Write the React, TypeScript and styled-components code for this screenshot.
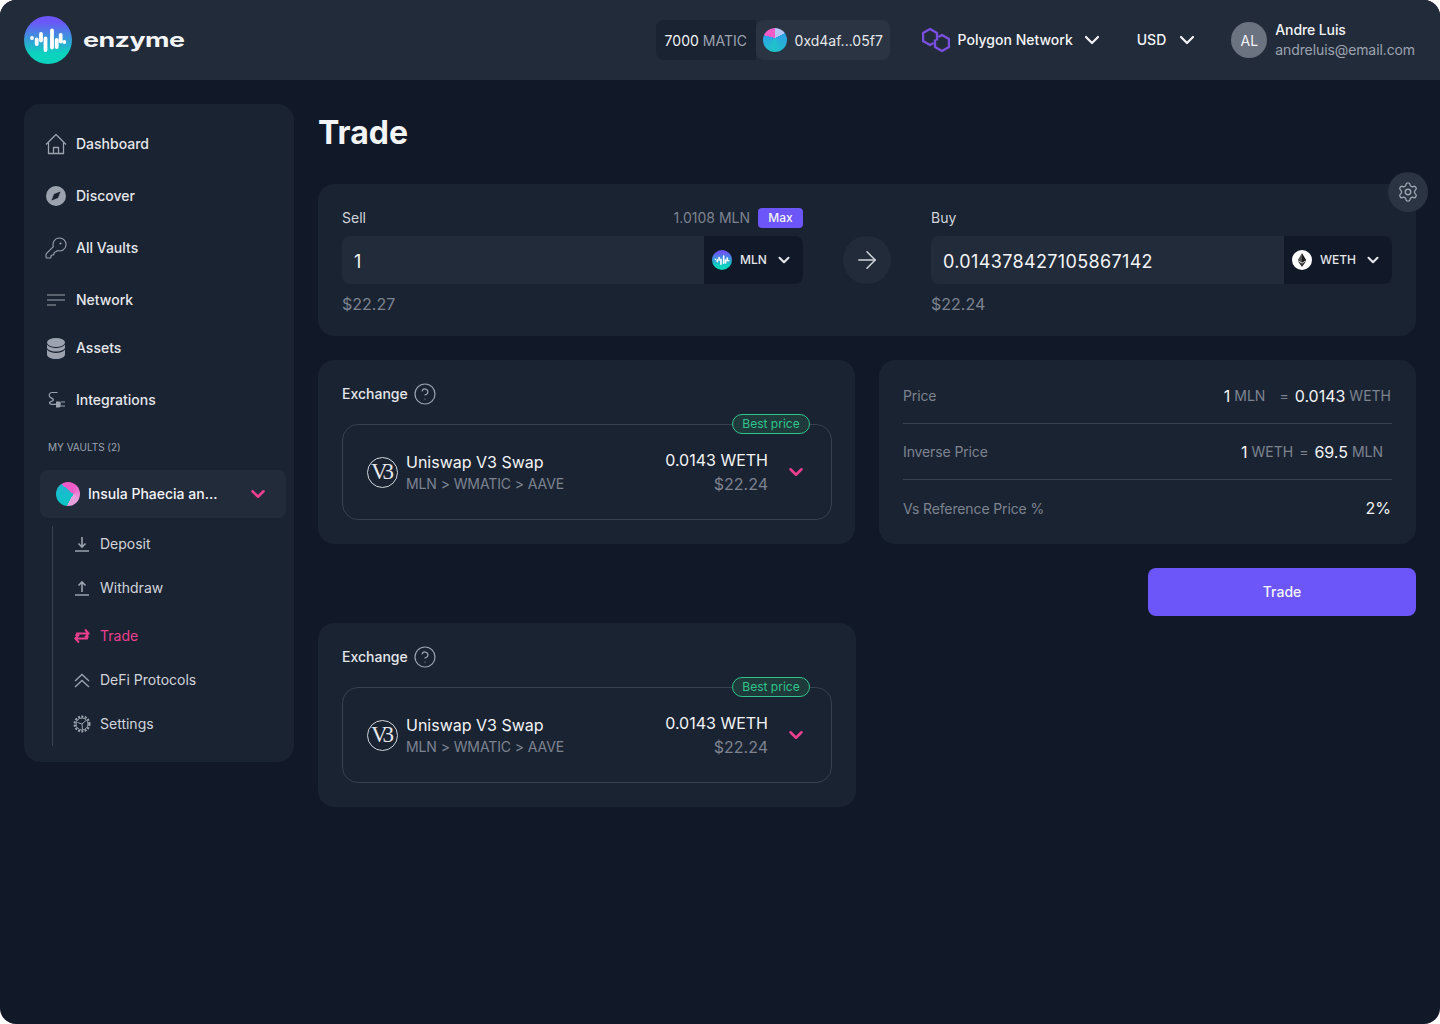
import React from 'react'
import styled, { createGlobalStyle } from 'styled-components'
import { ArrowRight, ChevronDown, CircleHelp, KeyRound, Settings } from 'lucide-react'

const GlobalStyle = createGlobalStyle`
  html, body {
    margin: 0;
    padding: 0;
    background: #ffffff;
  }
  * {
    box-sizing: border-box;
  }
  body {
    font-family: Inter, "Liberation Sans", sans-serif;
  }
`

const Page = styled.div`
  width: 1440px;
  height: 1024px;
  background: #111827;
  border-radius: 16px;
  overflow: hidden;
`

const Label = styled.span`
  margin-bottom: 2px;
`

const Header = styled.header`
  height: 80px;
  background: #222b3a;
  display: flex;
  align-items: center;
  padding: 0 25px 0 24px;
`

const Brand = styled.div`
  display: flex;
  align-items: center;
  gap: 11px;
  margin-right: auto;
`

const BrandName = styled.span`
  color: #f3f4f6;
  font-size: 20px;
  font-weight: 700;
  letter-spacing: -0.4px;
  transform: scaleX(1.34);
  transform-origin: left center;
`

const LogoCircle = styled.div<{ $size: number }>`
  width: ${p => p.$size}px;
  height: ${p => p.$size}px;
  border-radius: 50%;
  background: linear-gradient(180deg, #6c56f9 12%, #0bd3be 78%);
  flex-shrink: 0;
  svg {
    display: block;
    width: 100%;
    height: 100%;
  }
`

const Wallet = styled.div`
  display: flex;
  height: 40px;
  font-size: 14px;
`

const Balance = styled.div`
  display: flex;
  align-items: center;
  gap: 4px;
  width: 100px;
  padding-left: 9px;
  background: #1a2332;
  color: #f3f4f6;
  border-radius: 8px 0 0 8px;
  span {
    color: #9ca3af;
  }
`

const Address = styled.div`
  display: flex;
  align-items: center;
  gap: 8px;
  width: 134px;
  padding-left: 7px;
  background: #2a3443;
  color: #e5e7eb;
  border-radius: 8px;
`

const Identicon = styled.div<{ $kind: 'wallet' | 'vault' }>`
  width: 24px;
  height: 24px;
  border-radius: 50%;
  flex-shrink: 0;
  background: ${p =>
    p.$kind === 'wallet'
      ? 'conic-gradient(at 50% 42%, #b4c6f5 0 62deg, #2f9ee8 62deg, #1fc3c9 190deg, #2f9ee8 285deg, #f05bc8 285deg 360deg)'
      : 'conic-gradient(at 72% 50%, #f05bc8 0deg, #e8a0dc 150deg, #e8a0dc 207deg, #09c6c6 207deg, #20b8d0 310deg, #f05bc8 310deg)'};
`

const HeaderSelect = styled.div<{ $left: number; $gap: number }>`
  display: flex;
  align-items: center;
  gap: ${p => p.$gap}px;
  margin-left: ${p => p.$left}px;
  color: #f3f4f6;
  font-size: 14px;
  font-weight: 500;
  white-space: nowrap;
`

const NetworkChevron = styled(ChevronDown)`
  margin-left: -1px;
`

const User = styled.div`
  display: flex;
  align-items: center;
  gap: 8px;
  margin-left: 32px;
`

const Avatar = styled.div`
  width: 36px;
  height: 36px;
  border-radius: 50%;
  background: #6b7280;
  color: #f3f4f6;
  font-size: 14px;
  display: flex;
  align-items: center;
  justify-content: center;
`

const UserName = styled.div`
  color: #f3f4f6;
  font-size: 14px;
  font-weight: 500;
  line-height: 20px;
  letter-spacing: -0.1px;
`

const UserMail = styled.div`
  color: #9ca3af;
  font-size: 14px;
  line-height: 20px;
  letter-spacing: -0.1px;
`

const Body = styled.div`
  display: flex;
  align-items: flex-start;
  gap: 24px;
  padding: 24px 24px 0;
`

const Sidebar = styled.aside`
  width: 270px;
  flex-shrink: 0;
  background: #1a2332;
  border-radius: 16px;
  padding: 16px 8px 16px 16px;
`

const NavList = styled.nav`
  display: flex;
  flex-direction: column;
  gap: 4px;
`

const NavItem = styled.div<{ $tight?: boolean }>`
  display: flex;
  align-items: center;
  gap: 9px;
  height: 48px;
  padding-left: 5px;
  margin-top: ${p => (p.$tight ? '-4px' : '0')};
  color: #e5e7eb;
  font-size: 14px;
  font-weight: 500;
`

const NavIcon = styled.div`
  width: 22px;
  display: flex;
  justify-content: center;
  color: #9ca3af;
  svg {
    flex-shrink: 0;
  }
`

const SectionLabel = styled.div`
  margin: 15px 0 15px 8px;
  height: 16px;
  line-height: 16px;
  color: #9ca3af;
  font-size: 10px;
  font-weight: 400;
`

const VaultSelect = styled.div`
  display: flex;
  align-items: center;
  height: 48px;
  padding: 0 17px 0 16px;
  background: #222b3a;
  border-radius: 8px;
  color: #f3f4f6;
  font-size: 14px;
  font-weight: 500;
  gap: 8px;
  svg {
    margin-left: auto;
  }
`

const SubList = styled.div`
  display: flex;
  flex-direction: column;
  margin: 8px 0 0 12px;
  border-left: 1px solid #374151;
  height: 220px;
  padding-left: 21px;
`

const SubItem = styled.div<{ $active?: boolean; $top?: number }>`
  display: flex;
  align-items: center;
  gap: 10px;
  height: 44px;
  flex-shrink: 0;
  margin-top: ${p => p.$top ?? 0}px;
  color: ${p => (p.$active ? '#ec3f8f' : '#d1d5db')};
  font-size: 14px;
`

const SubIcon = styled.div<{ $active?: boolean }>`
  width: 16px;
  display: flex;
  justify-content: center;
  color: ${p => (p.$active ? '#ec3f8f' : '#9ca3af')};
  svg {
    flex-shrink: 0;
  }
`

const Main = styled.main`
  flex: 1;
  min-width: 0;
`

const Title = styled.h1`
  margin: 9px 0 31px;
  color: #f3f4f6;
  font-size: 32px;
  line-height: 40px;
  font-weight: 700;
`

const Card = styled.section`
  background: #1a2332;
  border-radius: 16px;
`

const SwapCard = styled(Card)`
  position: relative;
  display: grid;
  grid-template-columns: 461px 48px 461px;
  column-gap: 40px;
  height: 152px;
  padding: 24px;
`

const SettingsButton = styled.div`
  position: absolute;
  top: -12px;
  right: -12px;
  width: 40px;
  height: 40px;
  border-radius: 50%;
  background: #2a3443;
  color: #9ca3af;
  display: flex;
  align-items: center;
  justify-content: center;
`

const SwapLabels = styled.div`
  display: flex;
  align-items: center;
  justify-content: space-between;
  height: 20px;
  color: #d1d5db;
  font-size: 14px;
`

const Available = styled.div`
  display: flex;
  align-items: center;
  gap: 8px;
  color: #7d8490;
`

const MaxPill = styled.div`
  width: 45px;
  height: 20px;
  border-radius: 4px;
  background: #6c56f9;
  color: #f3f4f6;
  font-size: 12px;
  font-weight: 500;
  display: flex;
  align-items: center;
  justify-content: center;
`

const AmountField = styled.div`
  display: flex;
  height: 48px;
  margin-top: 8px;
  border-radius: 8px;
  overflow: hidden;
  background: #222b3a;
`

const AmountValue = styled.div`
  flex: 1;
  padding: 2px 0 0 12px;
  display: flex;
  align-items: center;
  color: #f3f4f6;
  font-size: 18px;
  letter-spacing: 0.35px;
`

const TokenSelect = styled.div<{ $width: number }>`
  width: ${p => p.$width}px;
  display: flex;
  align-items: center;
  gap: 8px;
  padding-left: 8px;
  background: #111827;
  color: #e5e7eb;
  font-size: 12px;
  font-weight: 500;
`

const FiatValue = styled.div`
  margin-top: 11px;
  color: #7d8490;
  font-size: 16px;
  line-height: 18px;
`

const ArrowCircle = styled.div`
  align-self: start;
  margin-top: 28px;
  width: 48px;
  height: 48px;
  border-radius: 50%;
  background: #222b3a;
  color: #d1d5db;
  display: flex;
  align-items: center;
  justify-content: center;
`

const Columns = styled.div`
  display: grid;
  grid-template-columns: 537px 537px;
  column-gap: 24px;
  margin-top: 24px;
`

const ExchangeCard = styled(Card)<{ $below?: boolean }>`
  height: 184px;
  padding: 24px 0 24px 24px;
  width: ${p => (p.$below ? '538px' : 'auto')};
  margin-top: ${p => (p.$below ? '7px' : '0')};
`

const ExchangeHead = styled.div`
  display: flex;
  align-items: center;
  gap: 5px;
  height: 20px;
  color: #e5e7eb;
  font-size: 14px;
  font-weight: 500;
  svg {
    color: #9ca3af;
  }
`

const RouteBox = styled.div`
  position: relative;
  display: flex;
  align-items: center;
  width: 490px;
  height: 96px;
  margin-top: 20px;
  padding: 0 24px;
  border: 1px solid #374151;
  border-radius: 16px;
`

const BestPrice = styled.div`
  position: absolute;
  top: -11px;
  right: 21px;
  height: 20px;
  width: 78px;
  border: 1px solid #31c48d;
  border-radius: 10px;
  background: #1f3a3a;
  color: #31c48d;
  font-size: 12px;
  display: flex;
  align-items: center;
  justify-content: center;
`

const V3Mark = styled.div`
  width: 31px;
  height: 31px;
  border-radius: 50%;
  border: 1px solid #d1d5db;
  color: #e5e7eb;
  font-family: "Liberation Serif", serif;
  font-size: 23px;
  letter-spacing: -5px;
  padding-right: 5px;
  display: flex;
  align-items: center;
  justify-content: center;
  flex-shrink: 0;
`

const RouteInfo = styled.div`
  margin-left: 8px;
`

const RouteName = styled.div`
  color: #f3f4f6;
  font-size: 16px;
  line-height: 24px;
`

const RoutePath = styled.div`
  color: #7d8490;
  font-size: 14px;
  line-height: 20px;
  letter-spacing: -0.1px;
`

const RouteAmount = styled.div`
  margin-left: auto;
  margin-right: 17px;
  text-align: right;
`

const RouteValue = styled.div`
  color: #f3f4f6;
  font-size: 16px;
  line-height: 24px;
`

const RouteFiat = styled.div`
  color: #7d8490;
  font-size: 16px;
  line-height: 24px;
`

const PriceCard = styled(Card)`
  height: 184px;
  padding: 8px 24px;
`

const PriceRow = styled.div<{ $inset?: number; $last?: boolean }>`
  display: flex;
  align-items: center;
  justify-content: space-between;
  height: 56px;
  padding-right: ${p => p.$inset ?? 0}px;
  border-bottom: ${p => (p.$last ? 'none' : '1px solid #374151')};
  color: #7d8490;
  font-size: 14px;
  letter-spacing: -0.12px;
`

const PriceValue = styled.div`
  display: flex;
  align-items: center;
  margin-right: 1px;
  color: #7d8490;
  font-size: 14px;
  letter-spacing: 0;
  b {
    color: #f3f4f6;
    font-size: 16px;
    font-weight: 400;
  }
`

const Equals = styled.span<{ $wide?: boolean }>`
  margin: 0 ${p => (p.$wide ? '6px 0 14px' : '6px')};
`

const TradeRow = styled.div`
  display: flex;
  justify-content: flex-end;
  margin-top: 24px;
`

const TradeButton = styled.button`
  width: 268px;
  height: 48px;
  padding: 0 0 2px;
  border: none;
  border-radius: 8px;
  background: #6c56f9;
  color: #f3f4f6;
  font-family: inherit;
  font-size: 14px;
  font-weight: 500;
`

const Wave = () => (
  <svg viewBox="0 0 48 48" fill="none" stroke="#fff" strokeLinecap="round" strokeWidth="3.800">
    <path d="M8 22h.01M12.700 23.500v4.500M17 18v6.500M21.500 22.500v11.500M28 14.500v17M32.700 24v7M36.700 19v6.500M40.300 26h.01" />
  </svg>
)

const HomeIcon = () => (
  <svg width="22" height="22" viewBox="0 0 22 22" fill="none" stroke="currentColor" strokeWidth="1.300" strokeLinejoin="round">
    <path d="M1 11.500 11 1.500l10 10" />
    <path d="M3.500 9.500v11h15v-11" />
    <path d="M8.500 20.500v-6h5v6" />
  </svg>
)

const CompassIcon = () => (
  <svg width="20" height="20" viewBox="0 0 20 20">
    <circle cx="10" cy="10" r="10" fill="currentColor" />
    <path d="M14.500 5.500 12 12l-6.500 2.500L8 8z" fill="#1a2332" />
  </svg>
)

const LinesIcon = () => (
  <svg width="18" height="12" viewBox="0 0 18 12" fill="none" stroke="currentColor" strokeWidth="1.200">
    <path d="M0 1h18M0 6h18M0 11h9" />
  </svg>
)

const CoinsIcon = () => (
  <svg width="18" height="21" viewBox="0 0 18 21" fill="currentColor">
    <ellipse cx="9" cy="4.500" rx="9" ry="4.500" />
    <path d="M0 6.500c1.300 2.300 5 3.500 9 3.500s7.700-1.200 9-3.500v3c0 2.300-4 4-9 4s-9-1.700-9-4z" />
    <path d="M0 11.500c1.300 2.300 5 3.500 9 3.500s7.700-1.200 9-3.500v5c0 2.400-4 4.500-9 4.500s-9-2.100-9-4.500z" />
  </svg>
)

const PlugIcon = () => (
  <svg width="18" height="18" viewBox="0 0 18 18" fill="none" stroke="currentColor" strokeWidth="1.200">
    <path d="M10.500 1.500H5a2.700 2.700 0 0 0-2 4.600c.8.8 3.500 1.500 3.500 3 0 1.400-4 1-4 2.500 0 1 1 1.800 2.500 1.800H9" />
    <path d="M9 10.500h3.500l1.200 1v4l-1.200 1H9z" fill="currentColor" stroke="none" />
    <path d="M13.700 11h4.300M13.700 15h4.300" />
  </svg>
)

const DepositIcon = () => (
  <svg width="16" height="16" viewBox="0 0 16 16" fill="none" stroke="currentColor" strokeWidth="1.600">
    <path d="M1 15h14M8 1v10M4.500 7.500 8 11l3.500-3.500" />
  </svg>
)

const WithdrawIcon = () => (
  <svg width="16" height="16" viewBox="0 0 16 16" fill="none" stroke="currentColor" strokeWidth="1.600">
    <path d="M1 15h14M8 12V2M4.500 5.500 8 2l3.500 3.500" />
  </svg>
)

const SwapIcon = () => (
  <svg width="16" height="16" viewBox="0 0 16 16" fill="none" stroke="currentColor" strokeWidth="1.900">
    <path d="M2 8l1-2.500h11.500M11 1.500l3.700 4-3.700 4" />
    <path d="M14 8l-1 2.500H1.500M5 6.500l-3.700 4 3.700 4" />
  </svg>
)

const LayersIcon = () => (
  <svg width="16" height="15" viewBox="0 0 16 15" fill="none" stroke="currentColor" strokeWidth="1.300">
    <path d="M1 8l7-6.500L15 8M1 14l7-6.500L15 14" />
  </svg>
)

const GearIcon = () => (
  <svg width="18" height="18" viewBox="0 0 18 18" fill="none" stroke="currentColor">
    <circle cx="9" cy="9" r="7.400" strokeWidth="2.200" strokeDasharray="2 1.400" />
    <circle cx="9" cy="9" r="6" strokeWidth="1" />
    <path d="M9 9l4-3.500M9 9L4.500 7.500M9 9l.5 5.500" strokeWidth="1" />
  </svg>
)

const PolygonIcon = () => (
  <svg width="28" height="24" viewBox="0 0 28 24" fill="none" stroke="#7b4fe0" strokeWidth="2.400" strokeLinejoin="round">
    <path d="M15 12.500V5L8 1 1 5v8l7 4 3.500-2" />
    <path d="M13 11.500V19l7 4 7-4v-8l-7-4-3.500 2" />
  </svg>
)

const EthIcon = () => (
  <svg width="20" height="20" viewBox="0 0 20 20">
    <circle cx="10" cy="10" r="10" fill="#fff" />
    <path d="M10 3l-4.300 7.200L10 12.700z" fill="#555" />
    <path d="M10 3l4.300 7.200L10 12.700z" fill="#1a1a1a" />
    <path d="M5.700 11.100 10 17l4.300-5.900L10 13.600z" fill="#333" />
  </svg>
)

const Exchange = ({ below }: { below?: boolean }) => (
  <ExchangeCard $below={below}>
    <ExchangeHead>
      <Label>Exchange</Label>
      <CircleHelp size={24} strokeWidth={1.2} />
    </ExchangeHead>
    <RouteBox>
      <BestPrice>
        <Label>Best price</Label>
      </BestPrice>
      <V3Mark>V3</V3Mark>
      <RouteInfo>
        <RouteName>Uniswap V3 Swap</RouteName>
        <RoutePath>MLN &gt; WMATIC &gt; AAVE</RoutePath>
      </RouteInfo>
      <RouteAmount>
        <RouteValue>0.0143 WETH</RouteValue>
        <RouteFiat>$22.24</RouteFiat>
      </RouteAmount>
      <ChevronDown size={22} color="#ec3f8f" strokeWidth={2.8} />
    </RouteBox>
  </ExchangeCard>
)

export default function App() {
  return (
    <Page>
      <GlobalStyle />
      <Header>
        <Brand>
          <LogoCircle $size={48}>
            <Wave />
          </LogoCircle>
          <BrandName>enzyme</BrandName>
        </Brand>
        <Wallet>
          <Balance>
            7000 <span>MATIC</span>
          </Balance>
          <Address>
            <Identicon $kind="wallet" />
            0xd4af...05f7
          </Address>
        </Wallet>
        <HeaderSelect $left={32} $gap={8}>
          <PolygonIcon />
          <Label>Polygon Network</Label>
          <NetworkChevron size={24} strokeWidth={2.2} />
        </HeaderSelect>
        <HeaderSelect $left={33} $gap={9}>
          <Label>USD</Label>
          <ChevronDown size={24} strokeWidth={2.2} />
        </HeaderSelect>
        <User>
          <Avatar>AL</Avatar>
          <div>
            <UserName>Andre Luis</UserName>
            <UserMail>andreluis@email.com</UserMail>
          </div>
        </User>
      </Header>
      <Body>
        <Sidebar>
          <NavList>
            <NavItem>
              <NavIcon>
                <HomeIcon />
              </NavIcon>
              <Label>Dashboard</Label>
            </NavItem>
            <NavItem>
              <NavIcon>
                <CompassIcon />
              </NavIcon>
              <Label>Discover</Label>
            </NavItem>
            <NavItem>
              <NavIcon>
                <KeyRound size={24} strokeWidth={1.1} />
              </NavIcon>
              <Label>All Vaults</Label>
            </NavItem>
            <NavItem>
              <NavIcon>
                <LinesIcon />
              </NavIcon>
              <Label>Network</Label>
            </NavItem>
            <NavItem $tight>
              <NavIcon>
                <CoinsIcon />
              </NavIcon>
              <Label>Assets</Label>
            </NavItem>
            <NavItem>
              <NavIcon>
                <PlugIcon />
              </NavIcon>
              <Label>Integrations</Label>
            </NavItem>
          </NavList>
          <SectionLabel>MY VAULTS (2)</SectionLabel>
          <VaultSelect>
            <Identicon $kind="vault" />
            <Label>Insula Phaecia an...</Label>
            <ChevronDown size={22} color="#ec3f8f" strokeWidth={2.8} />
          </VaultSelect>
          <SubList>
            <SubItem $top={-4}>
              <SubIcon>
                <DepositIcon />
              </SubIcon>
              <Label>Deposit</Label>
            </SubItem>
            <SubItem>
              <SubIcon>
                <WithdrawIcon />
              </SubIcon>
              <Label>Withdraw</Label>
            </SubItem>
            <SubItem $active $top={4}>
              <SubIcon $active>
                <SwapIcon />
              </SubIcon>
              <Label>Trade</Label>
            </SubItem>
            <SubItem>
              <SubIcon>
                <LayersIcon />
              </SubIcon>
              <Label>DeFi Protocols</Label>
            </SubItem>
            <SubItem>
              <SubIcon>
                <GearIcon />
              </SubIcon>
              <Label>Settings</Label>
            </SubItem>
          </SubList>
        </Sidebar>
        <Main>
          <Title>Trade</Title>
          <SwapCard>
            <SettingsButton>
              <Settings size={22} strokeWidth={1.5} />
            </SettingsButton>
            <div>
              <SwapLabels>
                <Label>Sell</Label>
                <Available>
                  <Label>1.0108 MLN</Label>
                  <MaxPill>
                    <Label>Max</Label>
                  </MaxPill>
                </Available>
              </SwapLabels>
              <AmountField>
                <AmountValue>1</AmountValue>
                <TokenSelect $width={99}>
                  <LogoCircle $size={20}>
                    <Wave />
                  </LogoCircle>
                  <Label>MLN</Label>
                  <ChevronDown size={18} strokeWidth={2.8} />
                </TokenSelect>
              </AmountField>
              <FiatValue>$22.27</FiatValue>
            </div>
            <ArrowCircle>
              <ArrowRight size={28} strokeWidth={1.3} />
            </ArrowCircle>
            <div>
              <SwapLabels>
                <Label>Buy</Label>
              </SwapLabels>
              <AmountField>
                <AmountValue>0.014378427105867142</AmountValue>
                <TokenSelect $width={108}>
                  <EthIcon />
                  <Label>WETH</Label>
                  <ChevronDown size={18} strokeWidth={2.8} />
                </TokenSelect>
              </AmountField>
              <FiatValue>$22.24</FiatValue>
            </div>
          </SwapCard>
          <Columns>
            <Exchange />
            <PriceCard>
              <PriceRow>
                Price
                <PriceValue>
                  <b>1</b>&nbsp;MLN
                  <Equals $wide>=</Equals>
                  <b>0.0143</b>&nbsp;WETH
                </PriceValue>
              </PriceRow>
              <PriceRow $inset={8}>
                Inverse Price
                <PriceValue>
                  <b>1</b>&nbsp;WETH
                  <Equals>=</Equals>
                  <b>69.5</b>&nbsp;MLN
                </PriceValue>
              </PriceRow>
              <PriceRow $last>
                Vs Reference Price %
                <PriceValue>
                  <b>2%</b>
                </PriceValue>
              </PriceRow>
            </PriceCard>
          </Columns>
          <TradeRow>
            <TradeButton>Trade</TradeButton>
          </TradeRow>
          <Exchange below />
        </Main>
      </Body>
    </Page>
  )
}
